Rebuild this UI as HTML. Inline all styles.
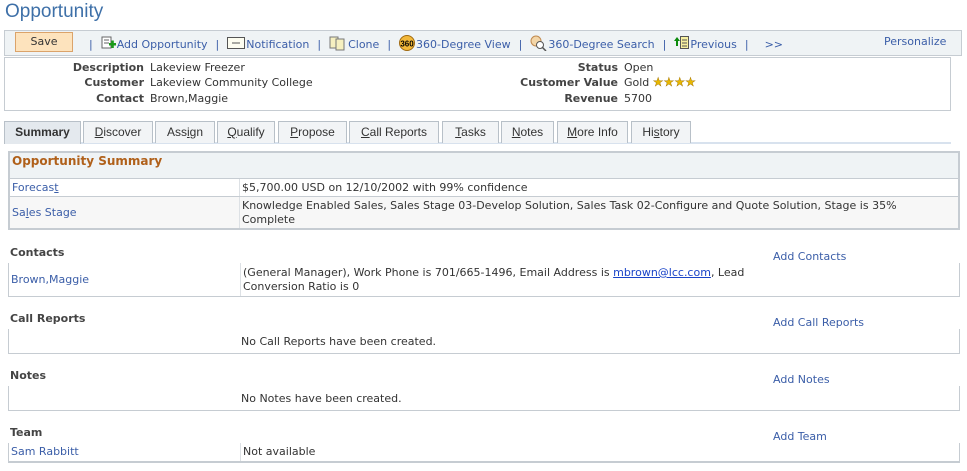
<!DOCTYPE html>
<html><head><meta charset="utf-8"><style>
*{margin:0;padding:0;box-sizing:border-box}
body{width:967px;height:471px;background:#fff;font-family:"DejaVu Sans",Verdana,sans-serif;font-size:11px;color:#333;position:relative;overflow:hidden}
.a{position:absolute;white-space:nowrap}
.lnk{color:#3b5ea8}
.b{font-weight:bold;color:#444}
.box{position:absolute;border:1px solid #c6ccd2}
.tab{position:absolute;top:121px;height:22px;border:1px solid #b8c0c8;border-bottom:none;background:#f2f4f6;font-family:"Liberation Sans",Arial,sans-serif;font-size:12px;color:#333;text-align:center;line-height:20px}
.row{position:absolute;left:8px;width:952px;border:1px solid #c6ccd2;border-top:none}
.vl{position:absolute;top:0;bottom:0;width:1px;background:#dde1e5}
u{text-decoration:underline}
.sp{display:inline-block;width:8px}
</style></head><body>
<div class="a" style="left:5px;top:1px;font-family:'Liberation Sans',Arial,sans-serif;font-size:19px;color:#3e70a8">Opportunity</div>

<div class="box" style="left:4px;top:30px;width:958px;height:26px;background:#eff3f5"></div>
<div class="a" style="left:15px;top:32px;width:58px;height:20px;background:#fde3bd;border:1px solid #dba36a;text-align:center;line-height:18px;color:#333">Save</div>
<div class="a lnk" style="top:35px;left:89px">|<span class="sp"></span><svg width="16" height="14" style="vertical-align:-2px"><rect x="1" y="1" width="9" height="11" fill="#fff" stroke="#666"/><line x1="3" y1="4" x2="8" y2="4" stroke="#666"/><line x1="3" y1="7" x2="8" y2="7" stroke="#666"/><rect x="8" y="7" width="7" height="2.5" fill="#1a9a1a"/><rect x="10.3" y="4.5" width="2.5" height="7.5" fill="#1a9a1a"/></svg>Add Opportunity<span class="sp"></span>|<span class="sp"></span><svg width="19" height="13" style="vertical-align:-2px"><rect x="0.5" y="0.5" width="17" height="11" fill="#fdfdf0" stroke="#555"/><line x1="5" y1="6" x2="13" y2="6" stroke="#555"/></svg>Notification<span class="sp"></span>|<span class="sp"></span><svg width="19" height="15" style="vertical-align:-3px"><rect x="1" y="1" width="8" height="11" fill="#f6f0c0" stroke="#777"/><rect x="7" y="3" width="8" height="11" fill="#f6f0c0" stroke="#777"/></svg>Clone<span class="sp"></span>|<span class="sp"></span><svg width="17" height="16" style="vertical-align:-3px"><circle cx="8" cy="8" r="7.5" fill="#f2b83a" stroke="#a06a10"/><text x="8" y="11.5" font-size="8" font-family="Liberation Sans" font-weight="bold" text-anchor="middle" fill="#000">360</text></svg>360-Degree View<span class="sp"></span>|<span class="sp"></span><svg width="18" height="16" style="vertical-align:-3px"><circle cx="6" cy="6" r="5" fill="#f3d6a8" stroke="#c08a50"/><circle cx="10" cy="10" r="3.5" fill="#fff" stroke="#555"/><line x1="12" y1="12" x2="16" y2="16" stroke="#555" stroke-width="1.5"/></svg>360-Degree Search<span class="sp"></span>|<span class="sp"></span><svg width="16" height="14" style="vertical-align:-2px"><path d="M3 1 L6 5 H4 V10 H2 V5 H0 Z" fill="#0a8a0a"/><rect x="6.5" y="0.5" width="8" height="12" fill="#f6f0a0" stroke="#555"/><line x1="8" y1="4" x2="13" y2="4" stroke="#555"/><line x1="8" y1="7" x2="13" y2="7" stroke="#555"/><line x1="8" y1="10" x2="13" y2="10" stroke="#555"/></svg>Previous<span class="sp"></span>|<span class="sp"></span><span class="sp"></span>&gt;&gt;</div>
<div class="a lnk" style="top:35px;left:884px">Personalize</div>

<div class="box" style="left:4px;top:57px;width:947px;height:54px"></div>
<div class="a b" style="top:60px;right:823px;text-align:right;line-height:15.3px">Description<br>Customer<br>Contact</div>
<div class="a" style="top:60px;left:150px;line-height:15.3px">Lakeview Freezer<br>Lakeview Community College<br>Brown,Maggie</div>
<div class="a b" style="top:60px;right:349px;text-align:right;line-height:15.3px">Status<br>Customer Value<br>Revenue</div>
<div class="a" style="top:60px;left:624px;line-height:15.3px">Open<br>Gold <span style="color:#e8b800;font-size:12px;-webkit-text-stroke:0.4px #a07000">★★★★</span><br>5700</div>

<div class="a" style="left:4px;top:142px;width:947px;height:2px;background:#d8e2ee"></div>
<div class="tab" style="left:4px;width:77px;font-weight:bold;background:#e4e9ee;height:23px">Summary</div>
<div class="tab" style="left:83px;width:70px"><u>D</u>iscover</div>
<div class="tab" style="left:155px;width:60px">Ass<u>i</u>gn</div>
<div class="tab" style="left:217px;width:58px"><u>Q</u>ualify</div>
<div class="tab" style="left:278px;width:69px"><u>P</u>ropose</div>
<div class="tab" style="left:349px;width:90px"><u>C</u>all Reports</div>
<div class="tab" style="left:442px;width:57px"><u>T</u>asks</div>
<div class="tab" style="left:501px;width:53px"><u>N</u>otes</div>
<div class="tab" style="left:557px;width:71px"><u>M</u>ore Info</div>
<div class="tab" style="left:631px;width:60px">Hi<u>s</u>tory</div>

<div class="box" style="left:8px;top:151px;width:952px;height:28px;background:#eff3f5;border-width:2px 2px 1px 2px;border-color:#c6ccd2"></div>
<div class="a" style="left:12px;top:154px;font-weight:bold;font-size:12px;color:#b0601a">Opportunity Summary</div>
<div class="row" style="top:179px;height:18px;border-left-width:2px;border-right-width:2px"><div class="vl" style="left:229px"></div>
<span class="a lnk" style="left:2px;top:2px">Forecas<u>t</u></span><span class="a" style="left:232px;top:2px">$5,700.00 USD on 12/10/2002 with 99% confidence</span></div>
<div class="row" style="top:197px;height:33px;background:#f7f7f7;border-left-width:2px;border-right-width:2px;border-bottom-width:2px"><div class="vl" style="left:229px"></div>
<span class="a lnk" style="left:2px;top:9px">Sa<u>l</u>es Stage</span><span class="a" style="left:232px;top:2px;line-height:14px">Knowledge Enabled Sales, Sales Stage 03-Develop Solution, Sales Task 02-Configure and Quote Solution, Stage is 35%<br>Complete</span></div>

<div class="a b" style="left:10px;top:246px">Contacts</div>
<div class="a lnk" style="left:773px;top:250px">Add Contacts</div>
<div class="row" style="top:263px;height:34px;border-top-width:2px"><div class="vl" style="left:231px"></div>
<span class="a lnk" style="left:2px;top:10px">Brown,Maggie</span><span class="a" style="left:234px;top:3px;line-height:13.5px">(General Manager), Work Phone is 701/665-1496, Email Address is <u class="lnk" style="color:#1a44c8">mbrown@lcc.com</u>, Lead<br>Conversion Ratio is 0</span></div>

<div class="a b" style="left:10px;top:312px">Call Reports</div>
<div class="a lnk" style="left:773px;top:316px">Add Call Reports</div>
<div class="row" style="top:329px;height:25px;border-top-width:2px"><span class="a" style="left:232px;top:6px">No Call Reports have been created.</span></div>

<div class="a b" style="left:10px;top:369px">Notes</div>
<div class="a lnk" style="left:773px;top:373px">Add Notes</div>
<div class="row" style="top:386px;height:25px;border-top-width:2px"><span class="a" style="left:232px;top:6px">No Notes have been created.</span></div>

<div class="a b" style="left:10px;top:426px">Team</div>
<div class="a lnk" style="left:773px;top:430px">Add Team</div>
<div class="row" style="top:443px;height:20px;border-top-width:2px;border-bottom-width:2px"><div class="vl" style="left:231px"></div>
<span class="a lnk" style="left:2px;top:2px">Sam Rabbitt</span><span class="a" style="left:234px;top:2px">Not available</span></div>
</body></html>
